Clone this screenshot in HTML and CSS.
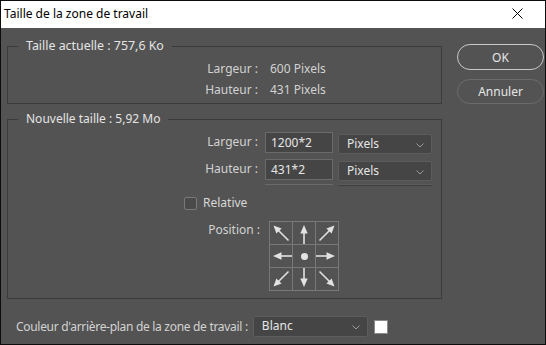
FILE: index.html
```html
<!DOCTYPE html>
<html lang="fr">
<head>
<meta charset="utf-8">
<title>Taille de la zone de travail</title>
<link rel="stylesheet" href="styles.css">
</head>
<body>
<svg width="0" height="0" class="defs">
  <defs>
    <symbol id="arr-up" viewBox="0 0 22 22">
      <line x1="11" y1="22" x2="11" y2="9" stroke="#e2e2e2" stroke-width="1.6"/>
      <polygon points="11,3 7.3,11.5 14.7,11.5" fill="#e2e2e2"/>
    </symbol>
    <symbol id="arr-diag" viewBox="0 0 22 22">
      <line x1="7" y1="7" x2="18.5" y2="18.5" stroke="#e2e2e2" stroke-width="1.6"/>
      <polygon points="3.5,3.5 11.6,6.4 6.4,11.6" fill="#e2e2e2"/>
    </symbol>
  </defs>
</svg>
<div class="window">
  <div class="titlebar">
    <span class="title">Taille de la zone de travail</span>
    <svg class="close" width="11" height="11" viewBox="0 0 11 11"><path d="M0.5 0.5 L10.5 10.5 M10.5 0.5 L0.5 10.5" stroke="#000" stroke-width="1"/></svg>
  </div>
  <div class="content">
    <div class="main">
      <fieldset class="group group-current">
        <legend>Taille actuelle : 757,6 Ko</legend>
        <div class="row info">
          <span class="label">Largeur :</span>
          <span class="value">600 Pixels</span>
        </div>
        <div class="row info">
          <span class="label">Hauteur :</span>
          <span class="value">431 Pixels</span>
        </div>
      </fieldset>
      <fieldset class="group group-new">
        <legend>Nouvelle taille : 5,92 Mo</legend>
        <div class="row field">
          <span class="label">Largeur :</span>
          <div class="input">1200*2</div>
          <div class="select unit">Pixels<svg class="chev" width="8" height="5" viewBox="0 0 8 5"><path d="M0.5 0.5 L4 4 L7.5 0.5" fill="none" stroke="#9a9a9a" stroke-width="1"/></svg></div>
        </div>
        <div class="row field">
          <span class="label">Hauteur :</span>
          <div class="input">431*2</div>
          <div class="select unit">Pixels<svg class="chev" width="8" height="5" viewBox="0 0 8 5"><path d="M0.5 0.5 L4 4 L7.5 0.5" fill="none" stroke="#9a9a9a" stroke-width="1"/></svg></div>
        </div>
        <div class="row ghost">
          <span class="label"></span>
          <div class="ghost-input"></div>
          <div class="ghost-select"></div>
        </div>
        <div class="row check">
          <span class="label"></span>
          <span class="checkbox"></span>
          <span class="check-text">Relative</span>
        </div>
        <div class="row position">
          <span class="label">Position :</span>
          <div class="anchor">
            <div class="cell"><svg width="22" height="22"><use href="#arr-diag"/></svg></div>
            <div class="cell"><svg width="22" height="22"><use href="#arr-up"/></svg></div>
            <div class="cell rot90"><svg width="22" height="22"><use href="#arr-diag"/></svg></div>
            <div class="cell rot270"><svg width="22" height="22"><use href="#arr-up"/></svg></div>
            <div class="cell"><span class="dot"></span></div>
            <div class="cell rot90"><svg width="22" height="22"><use href="#arr-up"/></svg></div>
            <div class="cell rot270"><svg width="22" height="22"><use href="#arr-diag"/></svg></div>
            <div class="cell rot180"><svg width="22" height="22"><use href="#arr-up"/></svg></div>
            <div class="cell rot180"><svg width="22" height="22"><use href="#arr-diag"/></svg></div>
          </div>
        </div>
      </fieldset>
    </div>
    <div class="buttons">
      <button class="btn btn-default">OK</button>
      <button class="btn">Annuler</button>
    </div>
  </div>
  <div class="footer">
    <span class="footer-label">Couleur d'arrière-plan de la zone de travail :</span>
    <div class="select bg">Blanc<svg class="chev" width="8" height="5" viewBox="0 0 8 5"><path d="M0.5 0.5 L4 4 L7.5 0.5" fill="none" stroke="#9a9a9a" stroke-width="1"/></svg></div>
    <span class="swatch"></span>
  </div>
</div>
</body>
</html>
```
FILE: styles.css
```css
* { box-sizing: border-box; }
html, body { margin: 0; padding: 0; }
body {
  width: 546px;
  height: 345px;
  overflow: hidden;
  font-family: "Noto Sans", "Open Sans", sans-serif;
  font-size: 12px;
  background: #535353;
}
.defs { position: absolute; width: 0; height: 0; }
.window {
  width: 546px;
  height: 345px;
  border: 1px solid #0c0c0c;
  background: #535353;
  display: flex;
  flex-direction: column;
}
.titlebar {
  height: 27px;
  background: #ffffff;
  display: flex;
  align-items: center;
  justify-content: space-between;
  padding: 0 22px 0 3px;
  flex: none;
}
.title {
  color: #000;
  font-size: 12px;
  line-height: 16px;
  margin-top: -2px;
}
.close { display: block; margin-top: -2px; }
.content {
  display: flex;
  padding: 10px 0 0 6px;
}
.main { width: 435px; }
.group {
  margin: 0;
  padding: 0;
  border: 1px solid #3b3b3b;
  min-width: 0;
}
.group legend {
  margin-left: 10px;
  padding: 0 8px;
  color: #e4e4e4;
  line-height: 16px;
}
.group-current legend { font-size: 12.4px; }
.group-current { padding: 4px 0 3px; }
.group-new { margin-top: 7px; padding: 5px 0 7px; }
.row { display: flex; align-items: center; }
.label {
  width: 250px;
  flex: none;
  text-align: right;
  color: #d2d2d2;
  line-height: 16px;
}
.info { height: 21px; }
.info .value { margin-left: 12px; color: #d2d2d2; }
.field { height: 21px; align-items: flex-start; }
.field + .field { margin-top: 6px; }
.field .label { margin-top: 2px; }
.input {
  margin-left: 7px;
  width: 68px;
  height: 21px;
  border: 1px solid #6a6a6a;
  background: #454545;
  color: #e6e6e6;
  padding: 1px 0 0 5px;
  line-height: 17px;
}
.select {
  position: relative;
  background: #454545;
  border: 1px solid #5c5c5c;
  border-radius: 2px;
  color: #e6e6e6;
  line-height: 18px;
  padding-left: 8px;
}
.chev { position: absolute; right: 7px; top: 8px; }
.unit {
  margin-left: 5px;
  margin-top: 2px;
  width: 94px;
  height: 20px;
}
.ghost { height: 2px; margin-top: 4px; overflow: hidden; }
.ghost-input { margin-left: 7px; width: 68px; height: 2px; border-top: 1px solid #6a6a6a; }
.ghost-select { margin-left: 5px; width: 94px; height: 2px; border-top: 1px solid #5c5c5c; border-bottom: 1px solid #3e3e3e; }
.check { height: 16px; margin-top: 9px; }
.check .label { width: 176px; }
.checkbox {
  width: 13px;
  height: 13px;
  border: 1px solid #7a7a7a;
  border-radius: 2px;
  background: #4a4a4a;
}
.check-text { margin-left: 6px; color: #d8d8d8; line-height: 16px; }
.position { margin-top: 10px; align-items: flex-start; }
.position .label { width: 252px; margin-top: 1px; }
.anchor {
  margin-left: 9px;
  display: grid;
  grid-template-columns: repeat(3, 23px);
  grid-template-rows: repeat(3, 23px);
  border-left: 1px solid #787878;
  border-top: 1px solid #787878;
}
.cell {
  border-right: 1px solid #787878;
  border-bottom: 1px solid #787878;
  display: flex;
  align-items: center;
  justify-content: center;
}
.cell svg { display: block; }
.rot90 svg { transform: rotate(90deg); }
.rot180 svg { transform: rotate(180deg); }
.rot270 svg { transform: rotate(270deg); }
.dot { width: 7px; height: 7px; border-radius: 50%; background: #e2e2e2; }
.buttons {
  margin-left: 15px;
  margin-top: 6px;
  display: flex;
  flex-direction: column;
  gap: 9px;
}
.btn {
  width: 87px;
  height: 25px;
  border-radius: 13px;
  border: 1px solid #6c6c6c;
  background: #535353;
  color: #e6e6e6;
  font-family: inherit;
  font-size: 12px;
  padding: 0;
}
.btn-default { border-color: #c9c9c9; height: 26px; }
.footer {
  display: flex;
  align-items: center;
  margin-top: 17px;
  padding-left: 15px;
  height: 21px;
}
.footer-label { color: #d2d2d2; line-height: 16px; letter-spacing: -0.3px; }
.bg { margin-left: 5px; width: 115px; height: 21px; }
.swatch {
  margin-left: 6px;
  width: 14px;
  height: 14px;
  background: #ffffff;
  border: 1px solid #8a8a8a;
}
```
